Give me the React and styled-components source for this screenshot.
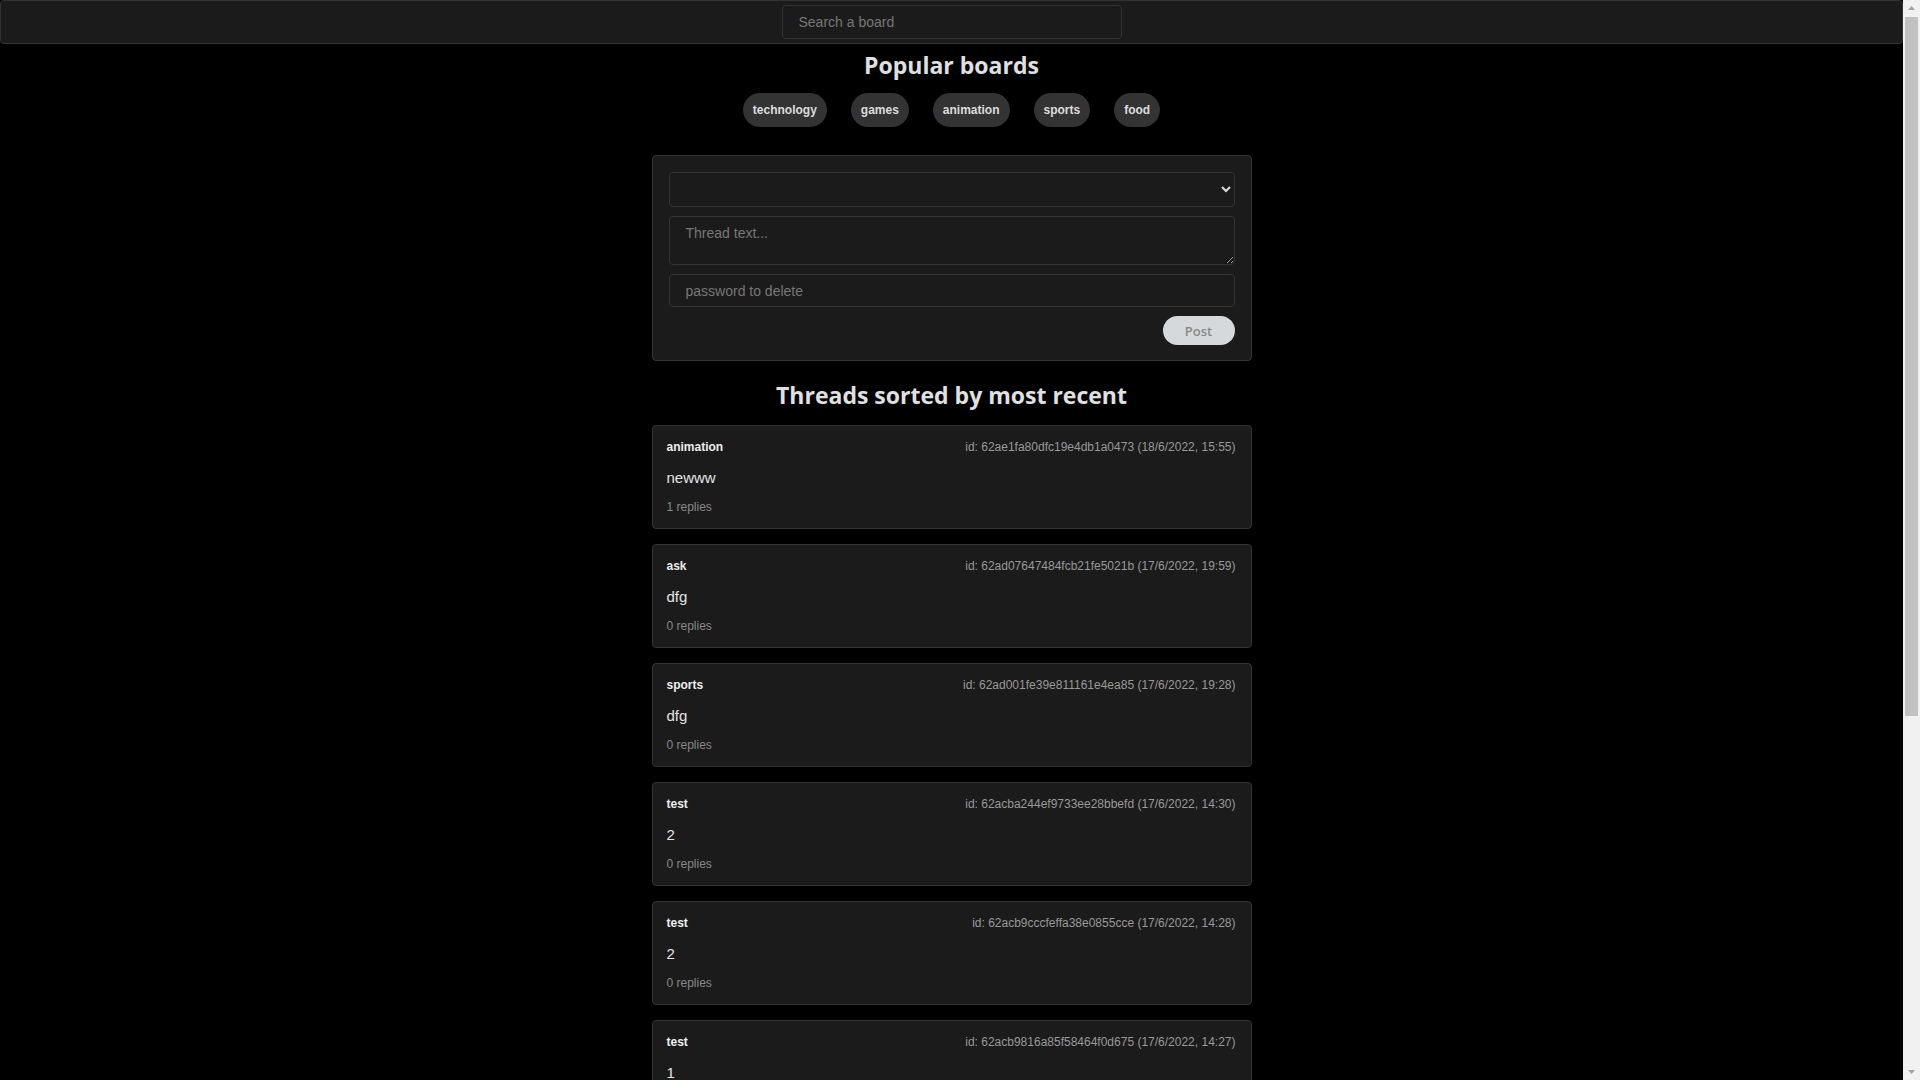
import React from 'react'
import styled, { createGlobalStyle } from 'styled-components'

const boards = ['technology', 'games', 'animation', 'sports', 'food']

const threads = [
    { board: 'animation', id: '62ae1fa80dfc19e4db1a0473', date: '18/6/2022, 15:55', text: 'newww', replies: 1 },
    { board: 'ask', id: '62ad07647484fcb21fe5021b', date: '17/6/2022, 19:59', text: 'dfg', replies: 0 },
    { board: 'sports', id: '62ad001fe39e811161e4ea85', date: '17/6/2022, 19:28', text: 'dfg', replies: 0 },
    { board: 'test', id: '62acba244ef9733ee28bbefd', date: '17/6/2022, 14:30', text: '2', replies: 0 },
    { board: 'test', id: '62acb9cccfeffa38e0855cce', date: '17/6/2022, 14:28', text: '2', replies: 0 },
    { board: 'test', id: '62acb9816a85f58464f0d675', date: '17/6/2022, 14:27', text: '1', replies: 0 },
    { board: 'test', id: '62acb8f26a85f58464f0d66e', date: '17/6/2022, 14:25', text: 'hello', replies: 2 },
    { board: 'games', id: '62acb7d16a85f58464f0d664', date: '17/6/2022, 14:20', text: 'anyone playing?', replies: 1 },
    { board: 'technology', id: '62acb6a06a85f58464f0d65a', date: '17/6/2022, 14:15', text: 'first', replies: 0 },
    { board: 'food', id: '62acb5526a85f58464f0d650', date: '17/6/2022, 14:10', text: 'pizza', replies: 3 },
]

class App extends React.Component {
    render() {
        return (
            <>
                <GlobalStyle />
                <TopBar>
                    <SearchInput placeholder="Search a board" />
                </TopBar>
                <Main>
                    <Heading>Popular boards</Heading>
                    <BoardList>
                        { boards.map(b => <BoardChip key={ b }>{ b }</BoardChip>) }
                    </BoardList>
                    <FormPanel>
                        <Select defaultValue="">
                            <option value=""></option>
                        </Select>
                        <TextArea placeholder="Thread text..." />
                        <Field placeholder="password to delete" />
                        <PostRow>
                            <PostButton>Post</PostButton>
                        </PostRow>
                    </FormPanel>
                    <Heading $top={ 17 }>Threads sorted by most recent</Heading>
                    <ThreadList>
                        { threads.map(t => (
                            <ThreadCard key={ t.id }>
                                <ThreadHeader>
                                    <BoardName>{ t.board }</BoardName>
                                    <ThreadId>id: { t.id } ({ t.date })</ThreadId>
                                </ThreadHeader>
                                <ThreadText>{ t.text }</ThreadText>
                                <Replies>{ t.replies } replies</Replies>
                            </ThreadCard>
                        )) }
                    </ThreadList>
                </Main>
                {/* browser scrollbar, headless hides the real one */}
                <ScrollTrack>
                    <ScrollArrow viewBox="0 0 17 17"><path d="M5 10h7L8.5 6z" /></ScrollArrow>
                    <ScrollThumb />
                    <ScrollSpacer />
                    <ScrollArrow viewBox="0 0 17 17"><path d="M5 7h7l-3.5 4z" /></ScrollArrow>
                </ScrollTrack>
            </>
        )
    }
}

const GlobalStyle = createGlobalStyle`
    body {
        margin: 0;
        padding-right: 17px;
        background: #000;
        color: #ddd;
        font-family: "Liberation Sans", Arial, sans-serif;
    }
    * { box-sizing: border-box; }
`

const ScrollTrack = styled.div`
    position: fixed;
    top: 0;
    right: 0;
    bottom: 0;
    width: 17px;
    display: flex;
    flex-direction: column;
    background: #f1f1f1;
`

const ScrollArrow = styled.svg`
    width: 17px;
    height: 17px;
    flex-shrink: 0;
    fill: #a3a3a3;
`

const ScrollThumb = styled.div`
    height: 699px;
    margin: 0 2px;
    background: #c1c1c1;
`

const ScrollSpacer = styled.div`
    flex: 1;
`

const TopBar = styled.div`
    display: flex;
    justify-content: center;
    padding: 4px 0;
    background: #1b1b1b;
    border: 1px solid #333;
    border-radius: 4px;
`

const SearchInput = styled.input`
    width: 340px;
    height: 34px;
    padding: 0 16px;
    background: #1b1b1b;
    border: 1px solid #333;
    border-radius: 4px;
    color: #ddd;
    font: 14px "Liberation Sans", Arial, sans-serif;
    outline: none;
    &::placeholder { color: #777; }
`

const Main = styled.div`
    display: flex;
    flex-direction: column;
    align-items: center;
    padding-bottom: 16px;
`

const Heading = styled.h1`
    margin: ${ p => p.$top || 4 }px 0 ${ p => p.$top ? 12 : 10 }px;
    font: 700 23px/35px "Open Sans", sans-serif;
    color: #e0e0e0;
`

const BoardList = styled.div`
    display: flex;
    gap: 24px;
    margin-bottom: 28px;
`

const BoardChip = styled.span`
    display: flex;
    align-items: center;
    height: 34px;
    padding: 0 10px;
    border-radius: 17px;
    background: #333;
    color: #ddd;
    font: bold 12px "Liberation Sans", Arial, sans-serif;
`

const FormPanel = styled.div`
    display: flex;
    flex-direction: column;
    gap: 9px;
    width: 600px;
    padding: 16px 16px 15px;
    background: #1b1b1b;
    border: 1px solid #333;
    border-radius: 4px;
`

const Select = styled.select`
    width: 100%;
    height: 35px;
    background: #1b1b1b;
    border: 1px solid #333;
    border-radius: 4px;
    color: #ddd;
    color-scheme: dark;
    outline: none;
`

const TextArea = styled.textarea`
    width: 100%;
    height: 49px;
    padding: 8px 16px;
    background: #1b1b1b;
    border: 1px solid #333;
    border-radius: 4px;
    color: #ddd;
    color-scheme: dark;
    font: 14px "Liberation Sans", Arial, sans-serif;
    outline: none;
    &::placeholder { color: #777; }
`

const Field = styled.input`
    width: 100%;
    height: 33px;
    padding: 0 16px;
    background: #1b1b1b;
    border: 1px solid #333;
    border-radius: 4px;
    color: #ddd;
    font: 14px "Liberation Sans", Arial, sans-serif;
    outline: none;
    &::placeholder { color: #777; }
`

const PostRow = styled.div`
    display: flex;
    justify-content: flex-end;
`

const PostButton = styled.button`
    width: 72px;
    height: 29px;
    border: none;
    border-radius: 15px;
    background: #d6d9dc;
    color: #888;
    font: 600 13px "Open Sans", sans-serif;
`

const ThreadList = styled.div`
    display: flex;
    flex-direction: column;
    gap: 15px;
    width: 600px;
`

const ThreadCard = styled.div`
    display: flex;
    flex-direction: column;
    padding: 14px 15px 14px 14px;
    background: #1b1b1b;
    border: 1px solid #333;
    border-radius: 4px;
`

const ThreadHeader = styled.div`
    display: flex;
    justify-content: space-between;
    font-size: 12px;
    line-height: 14px;
`

const BoardName = styled.span`
    font-weight: bold;
    color: #eee;
`

const ThreadId = styled.span`
    color: #999;
`

const ThreadText = styled.div`
    margin: 15px 0 14px;
    font-size: 15px;
    line-height: 17px;
    color: #e4e4e4;
`

const Replies = styled.div`
    font-size: 12px;
    line-height: 14px;
    color: #888;
`

export default App
